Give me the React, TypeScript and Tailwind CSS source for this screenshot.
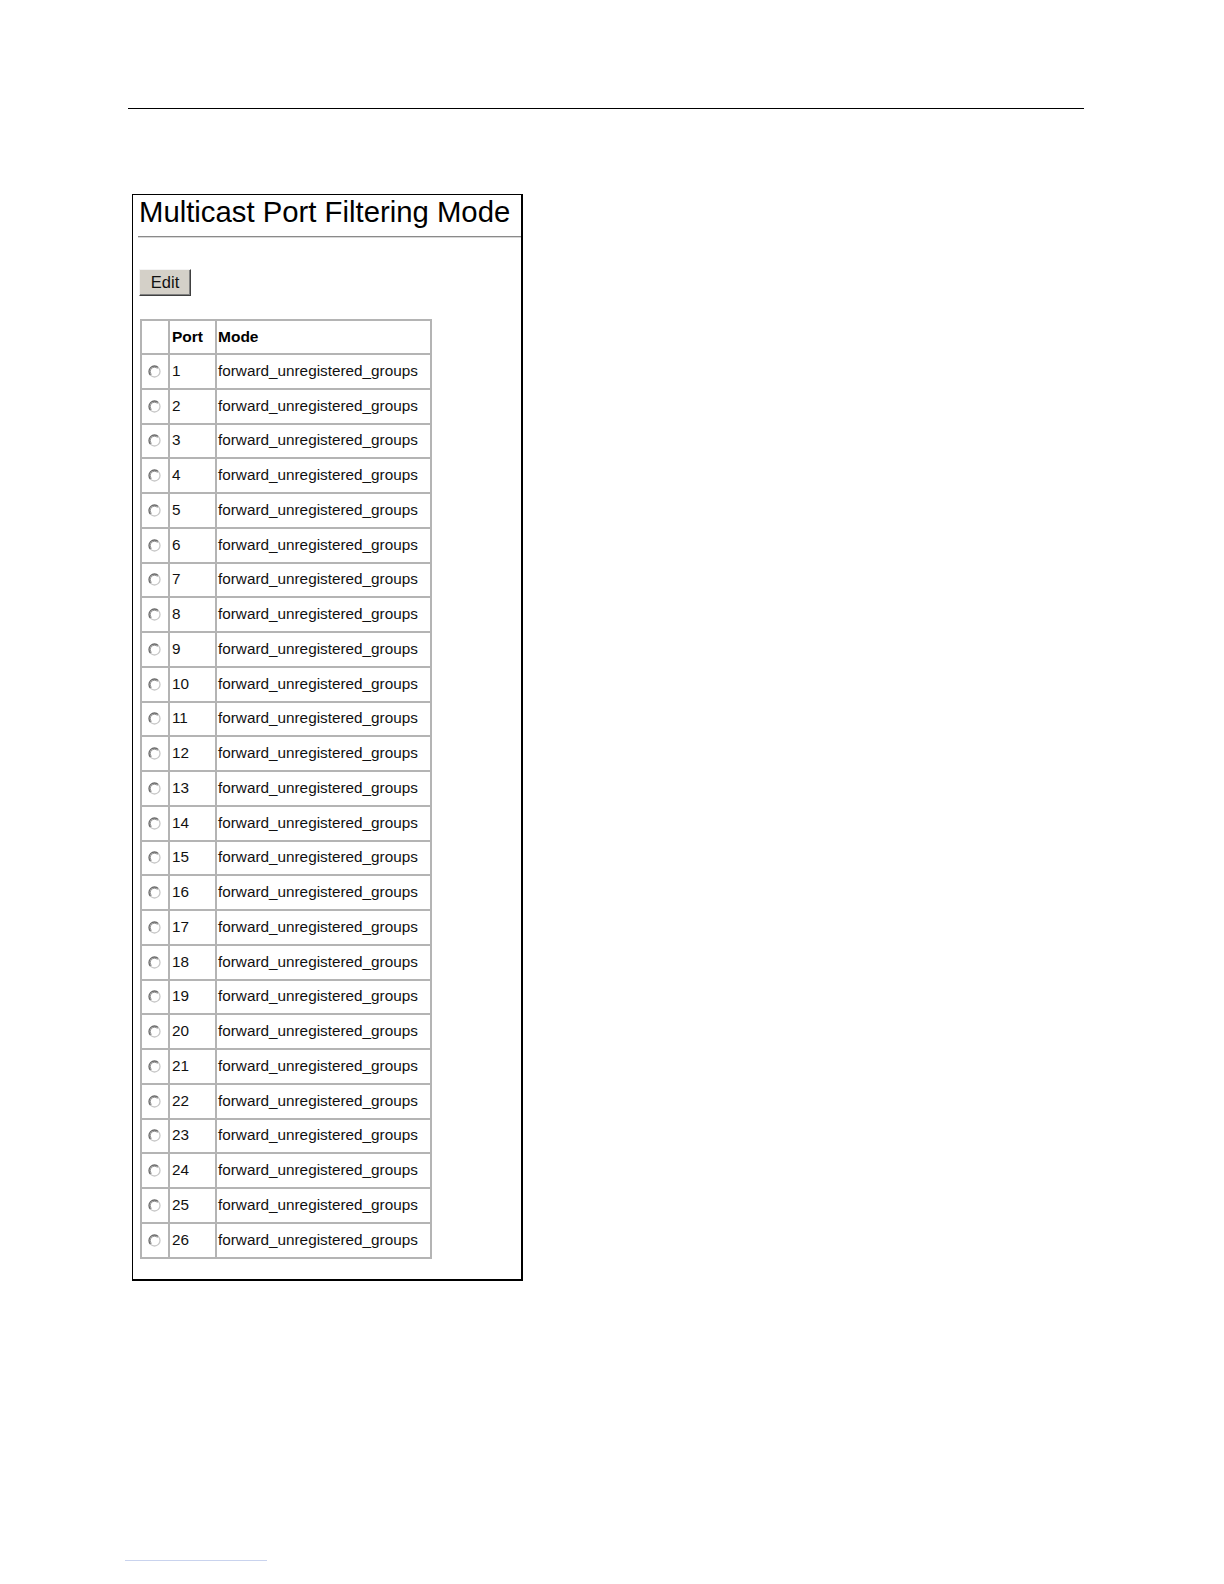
import React from "react";

const ports = Array.from({ length: 26 }, (_, i) => i + 1);

function Radio() {
  return (
    <svg width="13" height="13" viewBox="0 0 13 13" className="block">
      <circle cx="6.5" cy="6.5" r="5.5" fill="#ffffff" />
      {/* dark upper-left, light lower-right, like a classic win radio */}
      <path d="M2.6 10.4 A5.5 5.5 0 0 1 10.4 2.6" fill="none" stroke="#6a6a6a" strokeWidth="1.3" />
      <path d="M10.4 2.6 A5.5 5.5 0 0 1 2.6 10.4" fill="none" stroke="#c8c8c8" strokeWidth="1.3" />
      <path d="M3.5 9.5 A4.2 4.2 0 0 1 9.5 3.5" fill="none" stroke="#303030" strokeWidth="0.9" opacity="0.6" />
    </svg>
  );
}

export default function App() {
  return (
    <div
      className="w-full min-h-screen bg-white text-black overflow-hidden"
      style={{ fontFamily: '"Liberation Sans", Arial, sans-serif' }}
    >
      <div className="pt-[108px] pl-[128px]">
        {/* page header rule */}
        <div className="w-[956px] h-px bg-black" />

        {/* screenshot frame */}
        <div className="mt-[85px] ml-[4px] w-[391px] border-l border-t border-r-2 border-b-2 border-black pb-[20px]">
          <h1 className="pl-[6px] text-[29.3px] leading-[33px] font-normal whitespace-nowrap">
            Multicast Port Filtering Mode
          </h1>
          <div className="mt-[8px] ml-[5px] h-[2px] border-t border-[#8a8a8a] border-b border-b-[#d8d8d8]" />

          <div className="mt-[31px] ml-[6px]">
            <button className="w-[52px] h-[27px] bg-[#d4d0c8] border border-t-[#f4f4f4] border-l-[#f4f4f4] border-r-[#404040] border-b-[#404040] shadow-[inset_-1px_-1px_0_#808080] text-[16.5px] leading-none text-[#111]">
              Edit
            </button>
          </div>

          <table className="mt-[23px] ml-[7px] border-separate border-spacing-0 border-l-2 border-t-2 border-[#b4b4b4] w-[292px]">
            <thead>
              <tr className="h-[34px]">
                <th className="w-[28px] border-r-2 border-b-2 border-[#b4b4b4]" />
                <th className="w-[47px] border-r-2 border-b-2 border-[#b4b4b4] text-left pl-[2px] text-[15.5px] font-bold">
                  Port
                </th>
                <th className="border-r-2 border-b-2 border-[#b4b4b4] text-left pl-[1px] text-[15.5px] font-bold">
                  Mode
                </th>
              </tr>
            </thead>
            <tbody>
              {ports.map((p) => (
                <tr key={p} className="h-[34.75px]">
                  <td className="border-r-2 border-b-2 border-[#b4b4b4] pl-[6px]">
                    <Radio />
                  </td>
                  <td className="border-r-2 border-b-2 border-[#b4b4b4] pl-[2px] text-[15.3px] text-[#111]">
                    {p}
                  </td>
                  <td className="border-r-2 border-b-2 border-[#b4b4b4] pl-[1px] text-[15.3px] text-[#111] whitespace-nowrap">
                    forward_unregistered_groups
                  </td>
                </tr>
              ))}
            </tbody>
          </table>
        </div>

        {/* faint footer rule */}
        <div className="mt-[279px] -ml-[3px] w-[142px] h-px bg-[#c9d3ee]" />
      </div>
    </div>
  );
}
